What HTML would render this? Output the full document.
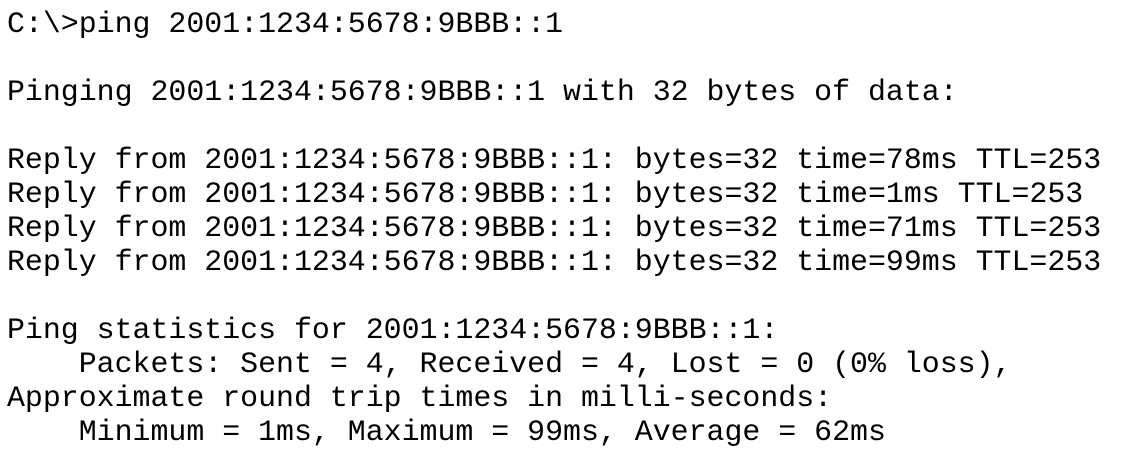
<!DOCTYPE html>
<html><head><meta charset="utf-8"><style>
html,body{margin:0;padding:0;background:#fff;width:1124px;height:466px;overflow:hidden}
pre{margin:0;position:absolute;left:7px;top:7px;font-family:"Liberation Mono",monospace;font-size:29.9px;line-height:34px;color:#000}
</style></head><body><pre>C:\&gt;ping 2001:1234:5678:9BBB::1

Pinging 2001:1234:5678:9BBB::1 with 32 bytes of data:

Reply from 2001:1234:5678:9BBB::1: bytes=32 time=78ms TTL=253
Reply from 2001:1234:5678:9BBB::1: bytes=32 time=1ms TTL=253
Reply from 2001:1234:5678:9BBB::1: bytes=32 time=71ms TTL=253
Reply from 2001:1234:5678:9BBB::1: bytes=32 time=99ms TTL=253

Ping statistics for 2001:1234:5678:9BBB::1:
    Packets: Sent = 4, Received = 4, Lost = 0 (0% loss),
Approximate round trip times in milli-seconds:
    Minimum = 1ms, Maximum = 99ms, Average = 62ms</pre></body></html>
